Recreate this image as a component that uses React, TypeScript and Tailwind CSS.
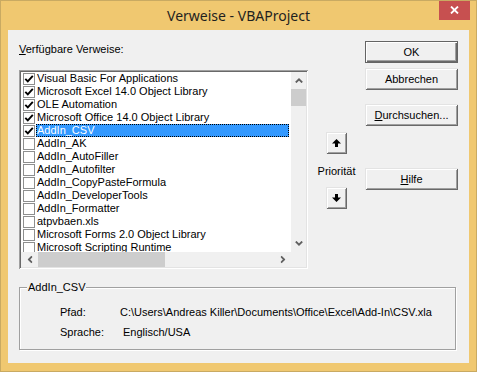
import React from "react";

const rows: { t: string; c: boolean; sel?: boolean }[] = [
  { t: "Visual Basic For Applications", c: true },
  { t: "Microsoft Excel 14.0 Object Library", c: true },
  { t: "OLE Automation", c: true },
  { t: "Microsoft Office 14.0 Object Library", c: true },
  { t: "AddIn_CSV", c: true, sel: true },
  { t: "AddIn_AK", c: false },
  { t: "AddIn_AutoFiller", c: false },
  { t: "AddIn_Autofilter", c: false },
  { t: "AddIn_CopyPasteFormula", c: false },
  { t: "AddIn_DeveloperTools", c: false },
  { t: "AddIn_Formatter", c: false },
  { t: "atpvbaen.xls", c: false },
  { t: "Microsoft Forms 2.0 Object Library", c: false },
  { t: "Microsoft Scripting Runtime", c: false },
];

function Btn({ children, def, className }: { children: React.ReactNode; def?: boolean; className?: string }) {
  return (
    <div
      className={
        "h-[22px] w-[93px] flex items-center justify-center bg-[#f0f0f0] " +
        (def
          ? "border border-[#646464] shadow-[inset_1px_1px_0_#ffffff,inset_-1px_-1px_0_#696969,inset_-2px_-2px_0_#a0a0a0] "
          : "shadow-[inset_1px_1px_0_#e3e3e3,inset_-1px_-1px_0_#696969,inset_2px_2px_0_#ffffff,inset_-2px_-2px_0_#a0a0a0] ") +
        (className ?? "")
      }
    >
      {children}
    </div>
  );
}

function ArrowBtn({ up, className }: { up?: boolean; className?: string }) {
  return (
    <div
      className={
        "w-[21px] h-[22px] flex items-center justify-center bg-[#f0f0f0] shadow-[inset_1px_1px_0_#e3e3e3,inset_-1px_-1px_0_#696969,inset_2px_2px_0_#ffffff,inset_-2px_-2px_0_#a0a0a0] " +
        (className ?? "")
      }
    >
      <svg width="9" height="8" viewBox="0 0 9 8" className={up ? "" : "rotate-180"}>
        <path d="M4.5 0 L9 4.5 L6 4.5 L6 8 L3 8 L3 4.5 L0 4.5 Z" fill="#000" />
      </svg>
    </div>
  );
}

function Chevron({ dir }: { dir: "up" | "down" | "left" | "right" }) {
  const rot = { up: "", down: "rotate-180", left: "-rotate-90", right: "rotate-90" }[dir];
  return (
    <svg width="8" height="5" viewBox="0 0 8 5" className={rot}>
      <path d="M0.8 4.5 L4 1.3 L7.2 4.5" fill="none" stroke="#606060" strokeWidth="1.8" />
    </svg>
  );
}

export default function App() {
  return (
    <div className="w-[477px] h-[372px] bg-[#f0c870] border border-[#c9aa62] flex flex-col font-['Liberation_Sans',Arial,sans-serif] text-[11px] leading-[13px] text-black overflow-hidden">
      {/* title bar */}
      <div className="relative h-[29px] flex items-center justify-center">
        <span className="font-['Noto_Sans',sans-serif] text-[14px] leading-[20px] text-[#1f1f1f]">Verweise - VBAProject</span>
        <div className="absolute top-[-1px] right-[6px] w-[31px] h-[20px] bg-[#c75050] flex items-center justify-center">
          <svg width="9" height="8" viewBox="0 0 9 8">
            <path d="M1 0.5 L8 7.5 M8 0.5 L1 7.5" stroke="#ffffff" strokeWidth="1.8" />
          </svg>
        </div>
      </div>

      {/* client */}
      <div className="mx-[7px] h-[333px] bg-[#f0f0f0] flex flex-col pl-[11px]">
        <div className="flex h-[239px]">
          {/* left column */}
          <div className="w-[289px] flex flex-col">
            <div className="mt-[13px] h-[13px]">
              <span className="underline underline-offset-[1px]">V</span>erfügbare Verweise:
            </div>
            <div className="mt-[14px] h-[199px] p-[2px] bg-[#f0f0f0] shadow-[inset_1px_1px_0_#a0a0a0,inset_-1px_-1px_0_#ffffff,inset_2px_2px_0_#696969,inset_-2px_-2px_0_#e3e3e3]">
              <div className="w-full h-full flex flex-col">
                <div className="flex h-[180px]">
                  <div className="w-[270px] h-full bg-white overflow-hidden flex flex-col">
                    {rows.map((r) => (
                      <div key={r.t} className="h-[13px] shrink-0 flex items-center">
                        <div className="ml-[2px] w-[12px] h-[12px] border border-[#8e8f8f] bg-white flex items-center justify-center shrink-0">
                          {r.c && (
                            <svg width="10" height="10" viewBox="0 0 10 10">
                              <path d="M1.3 4.8 L3.8 7.4 L8.8 1.8" fill="none" stroke="#000" strokeWidth="1.9" />
                            </svg>
                          )}
                        </div>
                        {r.sel ? (
                          <div className="ml-[1px] mr-[2px] flex-1 h-[13px] bg-[#3399ff] border border-dotted border-[#000] text-white flex items-center whitespace-nowrap">
                            {r.t}
                          </div>
                        ) : (
                          <div className="ml-[2px] whitespace-nowrap">{r.t}</div>
                        )}
                      </div>
                    ))}
                  </div>
                  {/* vertical scrollbar */}
                  <div className="w-[15px] h-full bg-[#f0f0f0] flex flex-col">
                    <div className="h-[17px] flex items-center justify-center">
                      <Chevron dir="up" />
                    </div>
                    <div className="h-[17px] bg-[#cdcdcd]" />
                    <div className="flex-1" />
                    <div className="h-[17px] flex items-center justify-center">
                      <Chevron dir="down" />
                    </div>
                  </div>
                </div>
                {/* horizontal scrollbar */}
                <div className="flex h-[15px] bg-[#f0f0f0]">
                  <div className="w-[17px] flex items-center justify-center">
                    <Chevron dir="left" />
                  </div>
                  <div className="w-[127px] bg-[#cdcdcd]" />
                  <div className="flex-1" />
                  <div className="w-[17px] flex items-center justify-center">
                    <Chevron dir="right" />
                  </div>
                  <div className="w-[15px]" />
                </div>
              </div>
            </div>
          </div>

          {/* middle column */}
          <div className="w-[57px] flex flex-col items-center">
            <ArrowBtn up className="mt-[102px]" />
            <div className="mt-[11px] h-[13px]">Priorität</div>
            <ArrowBtn className="mt-[9px]" />
          </div>

          {/* right column */}
          <div className="w-[93px] flex flex-col">
            <Btn def className="mt-[11px]">OK</Btn>
            <Btn className="mt-[5px]">Abbrechen</Btn>
            <Btn className="mt-[14px]">
              <span>
                <span className="underline underline-offset-[1px]">D</span>urchsuchen...
              </span>
            </Btn>
            <Btn className="mt-[42px]">
              <span>
                <span className="underline underline-offset-[1px]">H</span>ilfe
              </span>
            </Btn>
          </div>
        </div>

        {/* group box */}
        <div className="relative mt-[18px] w-[437px] h-[63px] border border-[#a0a0a0] shadow-[inset_1px_1px_0_#ffffff,1px_1px_0_#ffffff] pt-[14px] pl-[40px] flex flex-col">
          <div className="absolute top-[-7px] left-[7px] px-[1px] bg-[#f0f0f0] h-[13px]">AddIn_CSV</div>
          <div className="flex h-[20px] items-center">
            <div className="w-[60px]">Pfad:</div>
            <div>C:\Users\Andreas Killer\Documents\Office\Excel\Add-In\CSV.xla</div>
          </div>
          <div className="flex h-[20px] items-center">
            <div className="w-[60px]">Sprache:</div>
            <div className="pl-[3px]">Englisch/USA</div>
          </div>
        </div>
      </div>
    </div>
  );
}
